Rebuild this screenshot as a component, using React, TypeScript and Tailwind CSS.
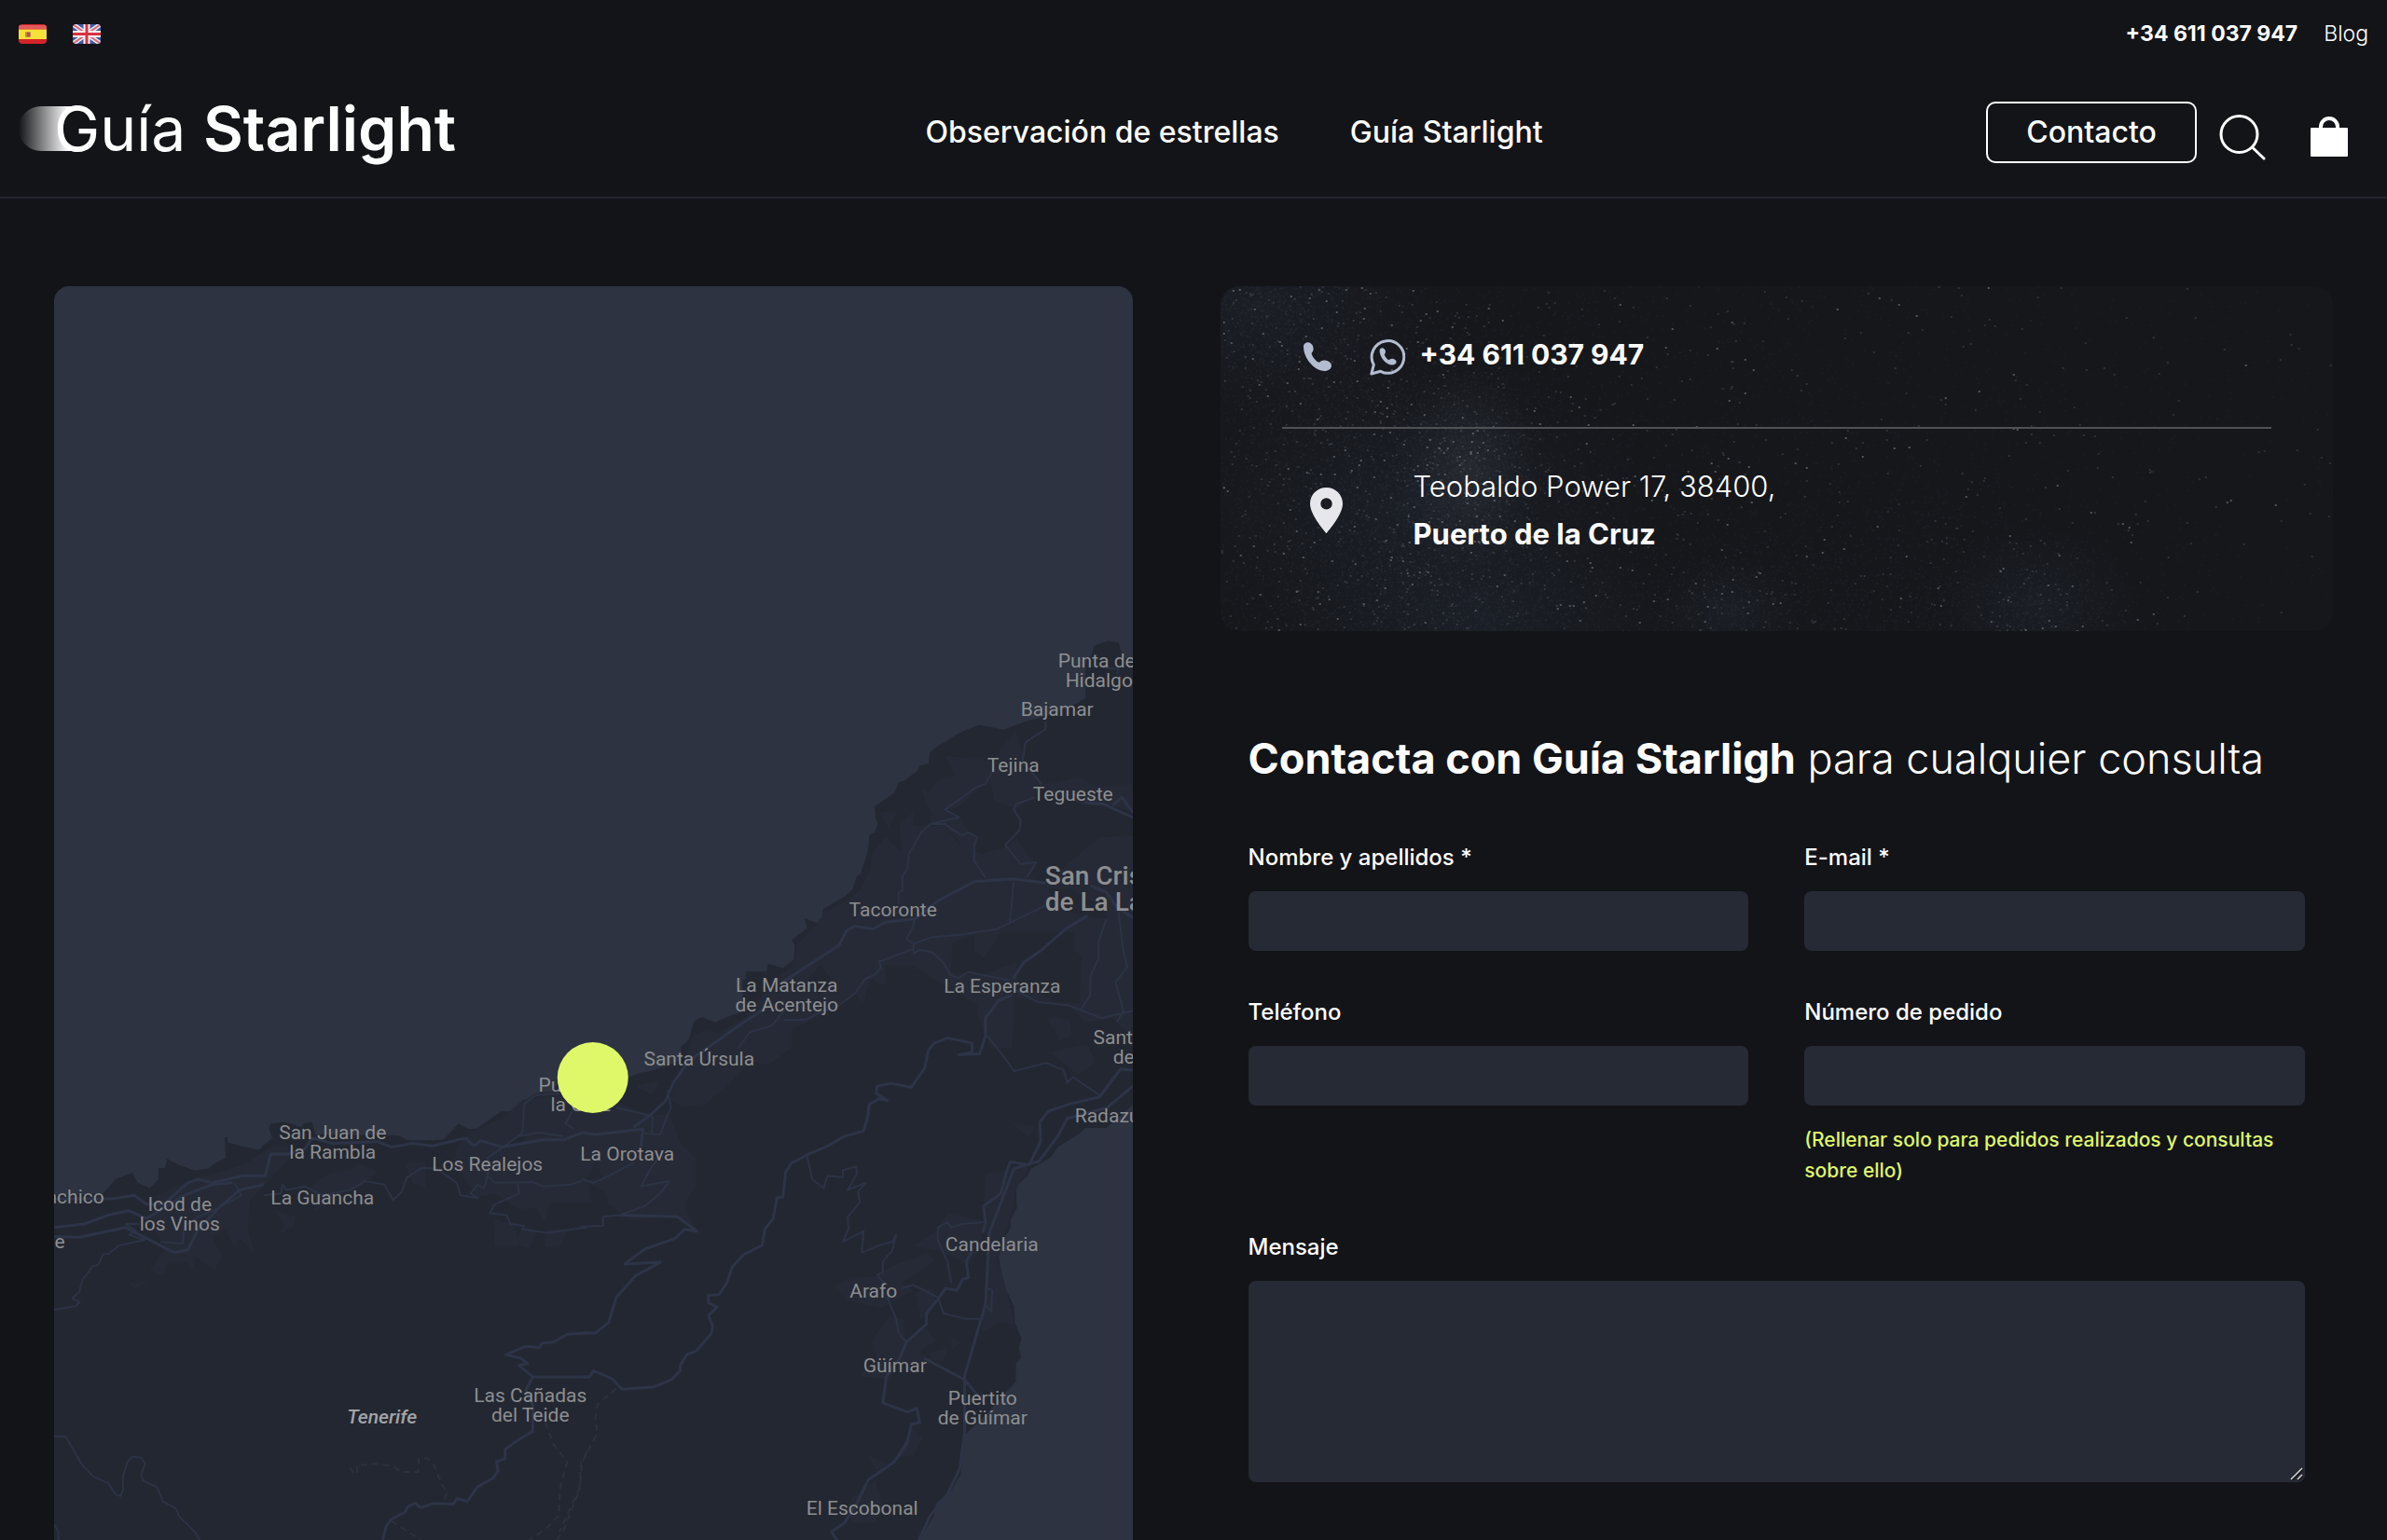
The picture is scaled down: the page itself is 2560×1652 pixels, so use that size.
import { useMemo } from "react";

interface MapLabel {
  x: number;
  y: number;
  lines: string[];
  anchor?: "start" | "middle" | "end";
}

// x is the middle of the label unless an anchor is given, y the first baseline
const TOWNS: MapLabel[] = [
  { x: 1179, y: 716, lines: ["Punta del", "Hidalgo"] },
  { x: 1134, y: 768, lines: ["Bajamar"] },
  { x: 1087, y: 828, lines: ["Tejina"] },
  { x: 1151, y: 859, lines: ["Tegueste"] },
  { x: 958, y: 983, lines: ["Tacoronte"] },
  { x: 844, y: 1064, lines: ["La Matanza", "de Acentejo"] },
  { x: 1075, y: 1065, lines: ["La Esperanza"] },
  { x: 1229, y: 1120, lines: ["Santa María", "del Mar"] },
  { x: 1153, y: 1204, lines: ["Radazul"], anchor: "start" },
  { x: 750, y: 1143, lines: ["Santa Úrsula"] },
  { x: 623, y: 1171, lines: ["Puerto de", "la Cruz"] },
  { x: 673, y: 1245, lines: ["La Orotava"] },
  { x: 523, y: 1256, lines: ["Los Realejos"] },
  { x: 357, y: 1222, lines: ["San Juan de", "la Rambla"] },
  { x: 346, y: 1292, lines: ["La Guancha"] },
  { x: 193, y: 1299, lines: ["Icod de", "los Vinos"] },
  { x: 112, y: 1291, lines: ["Garachico"], anchor: "end" },
  { x: 70, y: 1339, lines: ["El Tanque"], anchor: "end" },
  { x: 1064, y: 1342, lines: ["Candelaria"] },
  { x: 937, y: 1392, lines: ["Arafo"] },
  { x: 960, y: 1472, lines: ["Güímar"] },
  { x: 1054, y: 1507, lines: ["Puertito", "de Güímar"] },
  { x: 925, y: 1625, lines: ["El Escobonal"] },
  { x: 569, y: 1504, lines: ["Las Cañadas", "del Teide"] },
];

// The island comes in three survey sheets, each with its own grid
const SHEETS = [
  {
    id: "north",
    transform: "translate(800 650) scale(0.33333 0.35714)",
    land: "M1250 165 L1212 155 L1200 110 L1165 105 L1120 120 L1115 145 L1095 165 L1090 270 L1050 300 L1000 320 L950 335 L900 347 L830 372 L750 357 L690 380 L620 420 L592 440 L588 473 L560 480 L550 497 L510 525 L492 530 L480 560 L415 603 L418 640 L425 655 L415 680 L398 688 L392 740 L370 805 L357 812 L345 850 L320 872 L250 910 L245 935 L235 955 L190 938 L197 968 L148 1003 L158 1020 L155 1062 L120 1088 L72 1075 L68 1100 L30 1115 L-10 1122 L-10 1568 L1160 1568 L1250 1495Z",
    urban:
      "M640 450 L785 462 L800 500 L740 560 L690 600 L640 615 L690 640 L720 680 L745 700 L735 745 L705 745 L680 700 L640 660 L590 655 L600 620 L582 600 L567 550 L590 558 L620 520 L675 510Z M810 440 L870 375 L890 440 L900 490 L960 530 L920 580 L870 610 L800 585 L785 520Z M940 540 L1070 515 L1130 545 L1250 535 L1250 620 L1180 600 L1090 600 L980 560Z M430 620 L490 618 L460 665Z M540 660 L640 660 L690 720 L760 745 L830 725 L870 700 L930 770 L905 815 L970 830 L1080 740 L1140 695 L1250 690 L1250 1300 L1180 1240 L1090 1250 L1040 1200 L900 1180 L865 1175 L858 1325 L790 1330 L745 1230 L745 1200 L680 1160 L600 1120 L540 1080 L450 1080 L450 1140 L400 1120 L378 1200 L350 1160 L300 1200 L200 1250 L150 1270 L145 1330 L70 1380 L0 1350 L0 1230 L90 1130 L150 1080 L165 1020 L240 940 L260 915 L330 885 L370 850 L400 790 L410 740 L450 690 L500 740 L495 650 L540 620Z M970 1240 L1040 1240 L1050 1290 L1010 1305Z M980 1340 L1100 1315 L1125 1370 L1070 1410Z",
    holes:
      "M665 1010 L735 990 L735 1035 L765 1057 L820 980 L1060 980 L1055 1035 L1080 1050 L1075 1195 L1000 1190 L880 1130 L870 1070 L760 1110 L660 1100Z M975 850 L1040 850 L1160 910 L1160 940 L1090 930 L990 905Z M200 1120 L240 1080 L275 1120 L240 1170Z",
    roads:
      "M965 345 L965 370 L900 410 L890 470 L940 520 L950 535 M1150 185 L1200 190 L1195 205 M1090 240 L1090 275 L1060 292 M800 490 L770 535 L740 545 L690 580 L640 612 L688 635 L595 655 L565 680 L525 745 L520 790 L505 810 L503 855 L492 860 L492 895 M595 655 L640 655 L695 690 L715 680 L745 695 L735 720 L735 765 L770 815 M930 575 L870 595 L862 610 L885 645 L880 675 L835 718 L885 775 L935 770 L905 815 M862 828 L850 950 M545 940 L535 970 L518 1000 L540 1015 L600 995 L690 988 L810 970 L965 900 M540 1015 L540 1045 L560 1033 L600 1040 L635 1070 L660 1110 L685 1118 L715 1100 L850 1125 M540 1030 L430 1068 L435 1085 L415 1108 L385 1120 L350 1165 L300 1200 L240 1220 L195 1243 L120 1243 M860 1150 L940 1190 L1040 1200 L1145 1238 L1250 1215 M1160 940 L1135 1010 L1135 1060 L1110 1110 L1108 1170 L1080 1210 M1200 920 L1215 1040 L1228 1085 L1190 1130 L1215 1215 L1195 1250",
    highways:
      "M120 1130 L200 1080 L300 1020 L325 975 L350 962 L410 970 L450 950 L545 940 L620 885 L735 828 L860 820 L965 832 M1110 840 L1160 860 L1190 900 L1250 940 M1100 930 L1030 970 L950 1035 L895 1070 L860 1120 M1090 590 L1150 595 L1250 637 M1180 600 L1210 575 L1250 625",
    trails: "",
  },
  {
    id: "west",
    transform: "translate(50 1050) scale(0.3699 0.38392)",
    land: "M1568 250 L1500 255 L1470 315 L1420 320 L1390 340 L1365 370 L1320 370 L1290 390 L1250 418 L1225 420 L1195 405 L1150 450 L1050 452 L1020 438 L985 437 L780 435 L770 400 L745 405 L740 415 L690 400 L650 405 L645 418 L655 445 L615 478 L525 458 L525 442 L517 445 L520 500 L490 515 L470 530 L430 535 L385 520 L350 503 L345 528 L325 530 L325 560 L300 585 L265 570 L250 542 L200 560 L165 600 L0 605 L0 1568 L1568 1568Z",
    urban:
      "M320 605 L410 565 L520 535 L570 520 L650 470 L700 460 L705 500 L640 570 L590 620 L585 700 L602 765 L560 725 L545 755 L520 700 L480 720 L510 775 L488 815 L430 775 L425 812 L400 790 L350 795 L340 830 L300 815 L345 750 L300 680Z M785 560 L830 540 L880 535 L905 515 L960 540 L920 570 L850 600 L780 650 L760 600Z M660 645 L725 665 L715 695 L665 718 L690 690Z M1225 430 L1320 390 L1380 340 L1480 320 L1568 330 L1568 625 L1460 625 L1445 680 L1420 640 L1370 645 L1300 600 L1250 610 L1180 520 L1190 470Z M1040 515 L1100 510 L1100 585 L1060 570Z M1300 670 L1360 690 L1370 750 L1298 748Z M1380 690 L1425 700 L1400 755 L1362 740Z M1445 700 L1515 700 L1485 752 L1445 750Z M240 850 L300 843 L255 868Z",
    holes: "M1325 470 L1360 440 L1390 445 L1360 465Z",
    roads:
      "M22 925 L85 915 L97 903 L75 893 L95 875 L105 840 L135 803 L150 800 L165 770 L182 768 L210 745 L285 730 L240 715 L260 705 L230 685 L270 685 M630 605 L680 600 L685 575 L695 590 L750 580 L800 605 L880 590 L925 565 L980 575 L1005 618 L1030 595 L1045 555 L1090 528 L1130 530 L1190 570 L1200 605 L1250 612 L1230 600 L1250 575 L1268 585 L1280 550 L1300 570 L1410 568 L1440 580 L1520 575 L1568 560 M1568 695 L1450 710 L1380 700 L1385 690 L1345 685 L1335 660 L1285 655 L1300 630 L1370 600 L1365 565 M1280 550 L1280 500 L1325 470 L1380 430 L1385 350 L1420 325 L1490 320 M1365 440 L1430 430 L1500 440 M1525 370 L1505 405 L1530 420 M22 1278 L55 1278 L105 1360 L135 1390 L180 1410 L200 1440 L215 1445 L222 1430 L222 1390 L235 1350 L250 1335 L275 1338 L286 1355 L275 1385 L280 1402 L320 1420 L338 1460 L375 1480 L385 1502 L430 1545 L445 1568 M22 1525 L35 1545 L35 1568 M545 570 L565 605 L500 640 L440 665 L400 690 L395 740 L330 735",
    highways:
      "M22 615 L190 615 L255 605 L290 630 L340 630 L410 570 L440 560 L480 570 L570 550 L635 550 L650 490 L700 490 L750 475 L770 445 L830 460 L960 455 L1000 470 L1060 460 L1120 467 L1215 445 L1240 467 L1260 452 L1320 470 L1440 450 L1500 450 L1568 425 M22 695 L110 685 L180 660 L240 648 L290 670 L400 605 L480 575 L540 570 M22 720 L95 722 L230 695 L290 725 L370 765 L410 758 L440 700 L500 640 L560 590 L630 575 M1568 990 L1510 993 L1470 1015 L1437 1018 L1430 1030 L1390 1027 L1332 1050 L1375 1060 L1395 1075 L1370 1080 L1410 1112 L1568 1112 M1410 1112 L1390 1150 L1410 1190 L1410 1265 L1365 1290 L1330 1315 L1330 1340 L1305 1350 L1310 1375 L1295 1395 L1250 1420 L1220 1460 L1190 1452 L1180 1468 L1120 1466 L1085 1478 L1070 1465 L1048 1475 L1040 1490 L1000 1510 L985 1530 L975 1568",
    trails:
      "M880 1365 L890 1380 L902 1382 L900 1360 L950 1355 L1000 1360 L1030 1378 L1078 1378 L1080 1340 L1105 1340 L1125 1360 L1145 1410 L1163 1435 L1150 1465 M1435 1210 L1470 1300 L1510 1350 L1490 1420 L1485 1500 L1450 1535 L1400 1568 M1568 1320 L1550 1350 L1545 1430 L1500 1540 L1480 1568 M1000 1515 L1085 1568",
  },
  {
    id: "south",
    transform: "translate(600 1050) scale(0.40816 0.38392)",
    land: "M490 -20 L490 90 L455 100 L410 122 L375 107 L355 118 L340 170 L320 190 L322 225 L290 240 L240 258 L215 262 L185 275 L60 250 L60 1568 L945 1568 L985 1500 L990 1465 L1030 1430 L1055 1385 L1060 1330 L1065 1275 L1110 1230 L1170 1160 L1200 1125 L1200 1075 L1213 1060 L1208 1030 L1215 1005 L1197 960 L1195 915 L1170 860 L1155 780 L1165 730 L1187 695 L1185 675 L1203 640 L1200 590 L1205 575 L1230 552 L1240 530 L1290 500 L1310 470 L1370 430 L1400 395 L1400 -20Z",
    urban:
      "M60 380 L160 350 L240 380 L290 380 L320 460 L358 500 L358 580 L330 625 L355 695 L300 660 L190 675 L130 630 L60 625Z M355 155 L380 145 L420 150 L500 100 L540 60 L640 90 L612 130 L610 185 L565 205 L545 240 L505 230 L440 300 L385 350 L325 360 L290 340 L330 220Z M200 300 L265 283 L245 325Z M1295 105 L1340 115 L1345 160 L1310 172Z M1190 405 L1250 410 L1235 445Z M930 748 L990 705 L1020 655 L1110 675 L1110 750 L1075 800 L1000 760Z M720 860 L760 838 L830 830 L880 800 L970 765 L985 790 L900 850 L930 870 L850 920 L760 900Z M820 1010 L870 940 L905 950 L910 1010 L955 970 L990 1010 L950 1040 L980 1080 L890 1070 L870 1120 L790 1110 L835 1060Z M935 875 L985 865 L990 910 L950 955Z M1030 1000 L1055 1015 L1030 1040Z M975 1045 L1020 1030 L1010 1070 L975 1065Z M1120 545 L1235 525 L1200 590 L1190 650 L1150 780 L1165 830 L1190 930 L1195 970 L1160 960 L1110 990 L1125 780 L1115 640Z M925 1250 L955 1280 L930 1335 L890 1335Z M810 1332 L865 1355 L835 1375Z M770 1450 L830 1400 L850 1470 L830 1520 L780 1522 L750 1500Z",
    holes: "M95 510 L115 555 L72 562Z M75 570 L120 595 L130 628 L85 625Z",
    roads:
      "M650 490 L665 560 L695 585 L705 550 L745 555 L745 535 L780 525 L782 545 L758 590 L805 570 L785 595 L790 625 L758 665 L760 700 L745 735 L800 705 L795 765 L840 745 L875 735 L885 715 L875 760 L850 790 L850 820 L835 828 L855 850 M862 890 L885 950 L892 990 L912 1015 M900 865 L930 855 L995 890 L1010 935 L1070 950 L1105 950 M1125 160 L1170 220 L1195 258 L1280 235 L1325 255 L1335 290 L1350 275 L1420 325 M995 730 L995 695 L1020 680 L1030 695 L1060 685 L1115 680 M995 730 L1020 790 L1030 850 M1120 910 L1135 930 L1138 870 L1125 865 M590 90 L560 130 L500 150 L470 195 M590 115 L650 115 M150 360 L240 382 M285 310 L293 360 L265 435 L220 432 M245 385 L243 430 M60 560 L90 570 L140 545 L195 515 M275 480 L240 530 L215 580 L290 565 L265 600 L225 635 L160 660 L115 665 L115 690 L55 692",
    highways:
      "M1190 45 L1155 60 L1120 110 L1120 160 L1105 210 L1050 212 L1085 205 L1085 180 L1020 165 L985 180 L970 200 L960 250 L925 303 L870 292 L835 300 L833 320 L862 340 L840 335 L815 350 L810 390 L800 425 L750 440 L700 470 L655 490 L610 515 L595 540 L588 610 L572 612 L562 670 L540 700 L533 745 L485 770 L455 805 L440 850 L420 882 L392 885 L392 905 L415 918 L392 940 L403 970 L400 990 L360 1040 L335 1050 L318 1080 L318 1095 L295 1120 L250 1140 L165 1147 L140 1118 L90 1095 L80 1112 L60 1112 M160 660 L310 665 L362 705 L330 700 L305 725 L225 755 L172 797 L265 792 L200 830 L150 890 L130 960 L95 990 L60 990 M1507 300 L1440 360 L1335 390 L1310 440 L1260 510 L1195 530 L1170 600 L1130 710 L1120 910 L1065 1110 L1065 1270 L1052 1370 L1020 1440 L975 1500 L945 1568 M1507 255 L1475 252 L1420 330 L1340 350 L1285 370 L1263 400 L1265 455 L1235 520 L1185 512 L1175 540 L1160 600 L1115 635 L1120 680 L1113 710 M912 1015 L965 965 L965 935 L995 895 L1015 865 L1045 870 L1060 840 L1075 835 L1070 790 L1085 760 M912 1015 L895 1060 L860 1110 L850 1185 L915 1210 L940 1200 L947 1240 L925 1245 L915 1295 L880 1350 L812 1400 L780 1470 L750 1520 L715 1545 L730 1568 M960 1060 L985 1075 L1065 1120 L1120 1190 M560 70 L480 125 L420 170 L340 230 L300 290 L280 340 L240 380 L195 415 M60 430 L95 435 L220 420 L215 470",
    trails: "M150 1145 L100 1190 L95 1230 L100 1270 L60 1350 L55 1420 L20 1500 L0 1545",
  },
];

function TenerifeMap() {
  return (
    <section aria-label="Mapa" className="relative overflow-hidden rounded-t-2xl bg-[#2d3341]">
      <svg
        viewBox="58 307 1157 1345"
        preserveAspectRatio="xMidYMid slice"
        className="absolute inset-0 h-full w-full"
        fill="none"
        strokeLinejoin="round"
      >
        {SHEETS.map((s) => (
          <path key={s.id} d={s.land} transform={s.transform} fill="#232731" />
        ))}
        {SHEETS.map((s) => (
          <g key={s.id} transform={s.transform}>
            <path d={s.urban} fill="#262a36" />
            <path d={s.holes} fill="#232731" />
            <path d={s.roads} stroke="#2c3345" strokeWidth="2" vectorEffect="non-scaling-stroke" />
            <path d={s.highways} stroke="#2d3447" strokeWidth="3" vectorEffect="non-scaling-stroke" />
            <path d={s.trails} stroke="#2d313e" strokeWidth="2" strokeDasharray="7 5" vectorEffect="non-scaling-stroke" />
          </g>
        ))}
        <g className="font-['Roboto',sans-serif] text-[21px]" fill="#8d8e90">
          {TOWNS.map((town) => (
            <text key={town.lines[0]} textAnchor={town.anchor ?? "middle"}>
              {town.lines.map((line, i) => (
                <tspan key={line} x={town.x} y={town.y + i * 21}>
                  {line}
                </tspan>
              ))}
            </text>
          ))}
        </g>
        <text className="font-['Roboto',sans-serif] text-[28px] font-medium" fill="#8d8e90">
          <tspan x="1121" y="949">San Cristóbal</tspan>
          <tspan x="1121" y="977">de La Laguna</tspan>
        </text>
        <text x="410" y="1527" textAnchor="middle" fill="#a3a4a6" className="font-['Roboto',sans-serif] text-[21px] font-medium italic">
          Tenerife
        </text>
        <circle cx="636" cy="1156" r="38" fill="#dff86a" />
      </svg>
    </section>
  );
}

// Star clusters of the card background: centre, spread and weight
const CLUSTERS = [
  [260, 200, 60, 75, 1],
  [190, 190, 150, 120, 0.5],
  [240, 340, 170, 80, 0.6],
  [50, 20, 120, 90, 0.6],
  [540, 350, 60, 50, 0.5],
  [870, 350, 90, 60, 0.5],
  [700, 330, 180, 100, 0.25],
];

function density(x: number, y: number) {
  let d = 0.12 * (1 - x / 1300);
  for (const [cx, cy, sx, sy, w] of CLUSTERS) {
    d += w * Math.exp(-(((x - cx) / sx) ** 2 + ((y - cy) / sy) ** 2));
  }
  return d;
}

function useStars() {
  return useMemo(() => {
    let seed = 7321;
    const rand = () => {
      seed = (seed * 16807) % 2147483647;
      return seed / 2147483647;
    };
    const layers = { dust: "", faint: "", bright: "" };
    for (let i = 0; i < 60000; i++) {
      const x = Math.round(rand() * 1194);
      const y = Math.round(rand() * 370);
      if (rand() > density(x, y) * 0.8) continue;
      layers.dust += `M${x} ${y}h2`;
    }
    for (let i = 0; i < 6500; i++) {
      const x = Math.round(rand() * 1194);
      const y = Math.round(rand() * 370);
      const keep = 0.13 * (1 - x / 1400) + density(x, y) * 0.45;
      if (rand() > keep) continue;
      if (rand() < 0.2) layers.bright += `M${x} ${y}h2`;
      else layers.faint += `M${x} ${y}h2`;
    }
    return layers;
  }, []);
}

function Starfield() {
  const stars = useStars();
  return (
    <svg
      viewBox="0 0 1194 370"
      preserveAspectRatio="xMidYMid slice"
      className="absolute inset-0 h-full w-full"
      aria-hidden="true"
    >
      <defs>
        <radialGradient id="haze">
          <stop offset="0" stopColor="#3a3e44" stopOpacity="0.5" />
          <stop offset="1" stopColor="#2a2f38" stopOpacity="0" />
        </radialGradient>
        <radialGradient id="blueHaze">
          <stop offset="0" stopColor="#1f2631" stopOpacity="0.5" />
          <stop offset="1" stopColor="#1c222c" stopOpacity="0" />
        </radialGradient>
      </defs>
      <ellipse cx="265" cy="200" rx="80" ry="110" fill="url(#haze)" />
      <ellipse cx="200" cy="240" rx="260" ry="170" fill="url(#blueHaze)" />
      <ellipse cx="40" cy="20" rx="190" ry="130" fill="url(#blueHaze)" />
      <ellipse cx="280" cy="360" rx="220" ry="110" fill="url(#blueHaze)" />
      <ellipse cx="545" cy="350" rx="80" ry="60" fill="url(#blueHaze)" />
      <ellipse cx="875" cy="340" rx="110" ry="80" fill="url(#blueHaze)" />
      <path d={stars.dust} stroke="#6d7580" strokeOpacity="0.13" strokeWidth="1" />
      <path d={stars.faint} stroke="#8a9097" strokeOpacity="0.22" strokeWidth="2" />
      <path d={stars.bright} stroke="#8a9097" strokeOpacity="0.5" strokeWidth="2" />
    </svg>
  );
}

const HANDSET =
  "M1 5C1 1.500 4 0 6.500 .3C9 .8 11 3 11.500 6C12 8.500 11 10 9.500 12C10.500 16 14 20 17.500 22C19 20.500 21.500 19 24 19.500C28 20 31 22.500 31 25C31 28.500 27.500 31 23.500 31C12 30.500 1 17 1 5Z";

function PhoneIcon() {
  return (
    <svg width="32" height="32" viewBox="0 0 32 32" fill="#b4bcd0" aria-hidden="true">
      <path d={HANDSET} />
    </svg>
  );
}

function WhatsappIcon() {
  return (
    <svg width="38" height="40" viewBox="0 0 38 40" fill="none" aria-hidden="true">
      <path
        d="M1.800 38L4.300 28.300A17.300 17.300 0 1 1 11.500 35.300Z"
        stroke="#b4bcd0"
        strokeWidth="3"
        strokeLinejoin="round"
      />
      <path d={HANDSET} fill="#b4bcd0" transform="translate(10 10) scale(0.6)" />
    </svg>
  );
}

function PinIcon() {
  return (
    <svg width="35" height="49" viewBox="0 0 35 49" fill="#e6e7eb" aria-hidden="true">
      <path
        fillRule="evenodd"
        d="M17.500 0C7.800 0 0 7.600 0 17.400C0 29.500 17.500 49 17.500 49S35 29.500 35 17.400C35 7.600 27.200 0 17.500 0ZM17.500 11.200a6.200 6.200 0 1 1 0 12.400a6.200 6.200 0 0 1 0-12.400Z"
      />
    </svg>
  );
}

function SpainFlag() {
  return (
    <svg width="30" height="21" viewBox="0 0 30 21" className="rounded-sm" aria-hidden="true">
      <rect width="30" height="21" fill="#d4232a" />
      <rect y="1" width="30" height="4" fill="#e2595c" />
      <rect y="5.500" width="30" height="10.500" fill="#f6e03a" />
      <rect x="7" y="8" width="6" height="6" rx="1" fill="#c08a4a" />
      <rect x="9" y="9" width="3" height="4" fill="#b5563a" />
    </svg>
  );
}

function UkFlag() {
  return (
    <svg width="30" height="21" viewBox="0 0 30 21" className="rounded-sm" aria-hidden="true">
      <rect width="30" height="21" fill="#4257a4" />
      <path d="M0 0L30 21M30 0L0 21" stroke="#e9ebf5" strokeWidth="5" />
      <path d="M0 0L30 21M30 0L0 21" stroke="#d96a78" strokeWidth="2" />
      <path d="M15 0V21M0 10.500H30" stroke="#f3f3f8" strokeWidth="7" />
      <path d="M15 0V21M0 10.500H30" stroke="#d8323f" strokeWidth="3" />
    </svg>
  );
}

function Header() {
  return (
    <header className="border-b-2 border-[#22252e]">
      <div className="flex h-[72px] items-center justify-between px-5">
        <div className="flex gap-7">
          <a href="#es" aria-label="Español">
            <SpainFlag />
          </a>
          <a href="#en" aria-label="English">
            <UkFlag />
          </a>
        </div>
        <div className="flex items-center gap-7 text-[23px] leading-8">
          <a href="tel:+34611037947" className="font-bold">
            +34 611 037 947
          </a>
          <a href="#blog" className="font-light">
            Blog
          </a>
        </div>
      </div>
      <div className="flex h-[139px] items-center justify-between pr-[42px] pl-5">
        <a href="#inicio" className="relative mb-2 flex pr-7 pl-[38px] text-[66px] leading-[72px]">
          <svg width="92" height="48" viewBox="0 0 92 48" className="absolute top-3 left-0" aria-hidden="true">
            <defs>
              <linearGradient id="trail">
                <stop offset="0" stopColor="#ffffff" stopOpacity="0" />
                <stop offset="0.8" stopColor="#ffffff" stopOpacity="0.95" />
                <stop offset="1" stopColor="#ffffff" />
              </linearGradient>
            </defs>
            <path d="M24 0H64V48H24A24 24 0 0 1 24 0Z" fill="url(#trail)" />
            <ellipse cx="64" cy="24" rx="19" ry="22" fill="#131418" />
          </svg>
          <span className="relative">
            Guía <span className="font-semibold">Starlight</span>
          </span>
        </a>
        <nav className="flex gap-[76px] text-[32px] leading-10 font-medium">
          <a href="#observacion">Observación de estrellas</a>
          <a href="#guia">Guía Starlight</a>
        </nav>
        <div className="flex items-center">
          <button className="h-[66px] w-[226px] rounded-[10px] border-2 border-white text-[32px] leading-10 font-medium">
            Contacto
          </button>
          <div className="flex items-center gap-12 pt-2.5 pl-6">
            <button aria-label="Buscar">
              <svg width="50" height="50" viewBox="0 0 50 50" fill="none" stroke="#fff" strokeWidth="3" strokeLinecap="round">
                <circle cx="21.500" cy="22" r="19.500" />
                <path d="M35.500 36L48 48" />
              </svg>
            </button>
            <button aria-label="Carrito">
              <svg width="40" height="43" viewBox="0 0 40 43" fill="none">
                <rect y="12" width="40" height="31" rx="1" fill="#fff" />
                <path d="M11 14V11A9 9 0 0 1 29 11V14" stroke="#fff" strokeWidth="4" />
              </svg>
            </button>
          </div>
        </div>
      </div>
    </header>
  );
}

function ContactCard() {
  return (
    <section className="relative overflow-hidden rounded-[20px] bg-[#16171b] px-[66px]">
      <Starfield />
      <div className="relative flex h-[151px] items-center pl-[22px]">
        <PhoneIcon />
        <span className="ml-10">
          <WhatsappIcon />
        </span>
        <a href="tel:+34611037947" className="ml-4 pb-1.5 text-3xl font-bold">
          +34 611 037 947
        </a>
      </div>
      <hr className="relative border-t-2 border-[#505155]" />
      <div className="relative flex items-center gap-[76px] pt-9 pb-[79px] pl-[30px]">
        <PinIcon />
        <address className="text-[31px] leading-[51px] font-light not-italic">
          Teobaldo Power 17, 38400,
          <br />
          <strong className="font-bold">Puerto de la Cruz</strong>
        </address>
      </div>
    </section>
  );
}

interface FieldProps {
  id: string;
  label: string;
  type?: string;
  hint?: string;
}

function Field({ id, label, type = "text", hint }: FieldProps) {
  return (
    <div className="flex flex-col gap-5">
      <label htmlFor={id} className="text-2xl leading-8 font-medium">
        {label}
      </label>
      <input
        id={id}
        type={type}
        aria-describedby={hint ? `${id}-hint` : undefined}
        className="h-16 w-full rounded-lg bg-[#262a34] px-4 text-2xl outline-none"
      />
      {hint && (
        <p id={`${id}-hint`} className="text-[21px] leading-[33px] font-medium text-[#dff86a]">
          {hint}
        </p>
      )}
    </div>
  );
}

function ContactForm() {
  return (
    <form className="px-[30px] pt-[109px] pb-[62px]">
      <h1 className="mb-[62px] text-[45px] leading-[56px] font-light">
        <strong className="font-bold">Contacta con Guía Starligh</strong> para cualquier consulta
      </h1>
      <div className="grid grid-cols-2 gap-x-[60px] gap-y-[50px]">
        <Field id="nombre" label="Nombre y apellidos *" />
        <Field id="email" label="E-mail *" type="email" />
        <Field id="telefono" label="Teléfono" type="tel" />
        <Field
          id="pedido"
          label="Número de pedido"
          hint="(Rellenar solo para pedidos realizados y consultas sobre ello)"
        />
        <div className="col-span-2 flex flex-col gap-5">
          <label htmlFor="mensaje" className="text-2xl leading-8 font-medium">
            Mensaje
          </label>
          <div className="relative">
            <textarea
              id="mensaje"
              className="block h-[216px] w-full resize-none rounded-lg bg-[#262a34] p-4 text-2xl outline-none"
            />
            <svg
              width="14"
              height="14"
              viewBox="0 0 14 14"
              fill="none"
              strokeWidth="1.500"
              className="pointer-events-none absolute right-0.5 bottom-0.5"
              aria-hidden="true"
            >
              <path d="M2 14L14 2M9 14L14 9" stroke="#0e0f12" />
              <path d="M1 13L13 1M8 13L13 8" stroke="#d6d7da" />
            </svg>
          </div>
        </div>
      </div>
    </form>
  );
}

export default function App() {
  return (
    <div className="flex min-h-screen flex-col bg-[#131418] font-['Inter',sans-serif] text-white">
      <Header />
      <main className="grid flex-1 grid-cols-[1157fr_1194fr] gap-[94px] px-[58px] pt-[94px]">
        <TenerifeMap />
        <div>
          <ContactCard />
          <ContactForm />
        </div>
      </main>
    </div>
  );
}
